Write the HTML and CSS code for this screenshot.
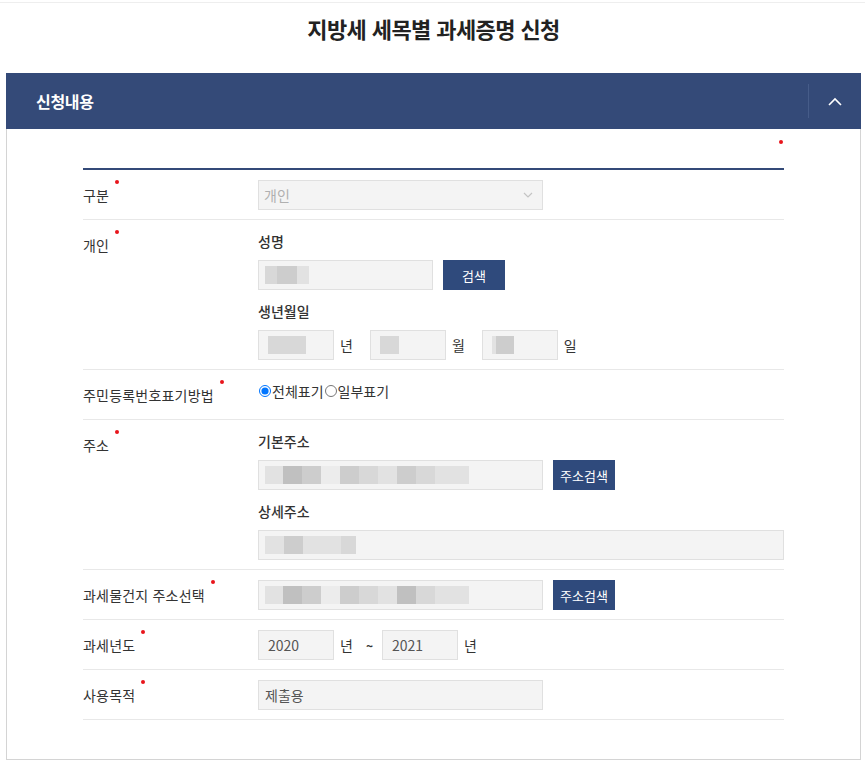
FILE: index.html
```html
<!DOCTYPE html>
<html lang="ko">
<head>
    <meta charset="UTF-8">
    <meta name="viewport" content="width=device-width, initial-scale=1.0">
    <title>지방세 세목별 과세증명 신청</title>
    <link rel="stylesheet" href="styles.css">
</head>
<body>
    <div class="page">
        <h2 class="title">지방세 세목별 과세증명 신청</h2>
        <div class="panel">
            <div class="panel-head">
                <h3>신청내용</h3>
                <button class="toggle" type="button" aria-label="접기">
                    <svg width="14" height="9" viewBox="0 0 14 9"><path d="M1 8 L7 2 L13 8" fill="none" stroke="#fff" stroke-width="1.6"/></svg>
                </button>
            </div>
            <div class="panel-body">
                <div class="req-note"><span class="dot"></span></div>
                <div class="form">
                    <div class="row">
                        <div class="label"><span class="req">구분</span></div>
                        <div class="field">
                            <div class="box w-mid select">개인
                                <svg width="10" height="6" viewBox="0 0 10 6"><path d="M1 1 L5 5 L9 1" fill="none" stroke="#c4c4c4" stroke-width="1.2"/></svg>
                            </div>
                        </div>
                    </div>
                    <div class="row">
                        <div class="label"><span class="req">개인</span></div>
                        <div class="field">
                            <div class="sub">성명</div>
                            <div class="line">
                                <div class="box w-name"><span class="blur b2" style="width:12px"></span><span class="blur b3" style="width:20px"></span><span class="blur b1" style="width:12px"></span></div>
                                <button class="btn" type="button">검색</button>
                            </div>
                            <div class="sub">생년월일</div>
                            <div class="line">
                                <div class="box w-small"><span class="blur b2" style="width:38px"></span></div>
                                <span class="unit">년</span>
                                <div class="box w-small"><span class="blur b2" style="width:19px"></span></div>
                                <span class="unit">월</span>
                                <div class="box w-small"><span class="blur b1" style="width:4px"></span><span class="blur b3" style="width:18px"></span></div>
                                <span class="unit">일</span>
                            </div>
                        </div>
                    </div>
                    <div class="row">
                        <div class="label"><span class="req">주민등록번호표기방법</span></div>
                        <div class="field">
                            <div class="radios">
                                <label><input type="radio" name="ssn" checked>전체표기</label>
                                <label><input type="radio" name="ssn">일부표기</label>
                            </div>
                        </div>
                    </div>
                    <div class="row">
                        <div class="label"><span class="req">주소</span></div>
                        <div class="field">
                            <div class="sub">기본주소</div>
                            <div class="line">
                                <div class="box w-mid">
                                    <span class="blur b1" style="width:18px"></span><span class="blur b4" style="width:19px"></span><span class="blur b3" style="width:19px"></span><span class="blur b0" style="width:19px"></span><span class="blur b3" style="width:19px"></span><span class="blur b2" style="width:19px"></span><span class="blur b1" style="width:19px"></span><span class="blur b3" style="width:19px"></span><span class="blur b2" style="width:19px"></span><span class="blur b1" style="width:19px"></span><span class="blur b1" style="width:15px"></span>
                                </div>
                                <button class="btn" type="button">주소검색</button>
                            </div>
                            <div class="sub">상세주소</div>
                            <div class="line">
                                <div class="box w-full"><span class="blur b1" style="width:19px"></span><span class="blur b3" style="width:19px"></span><span class="blur b1" style="width:19px"></span><span class="blur b1" style="width:19px"></span><span class="blur b2" style="width:15px"></span></div>
                            </div>
                        </div>
                    </div>
                    <div class="row">
                        <div class="label"><span class="req">과세물건지 주소선택</span></div>
                        <div class="field">
                            <div class="line">
                                <div class="box w-mid">
                                    <span class="blur b1" style="width:18px"></span><span class="blur b4" style="width:19px"></span><span class="blur b3" style="width:19px"></span><span class="blur b0" style="width:19px"></span><span class="blur b3" style="width:19px"></span><span class="blur b2" style="width:19px"></span><span class="blur b1" style="width:19px"></span><span class="blur b4" style="width:19px"></span><span class="blur b2" style="width:19px"></span><span class="blur b1" style="width:19px"></span><span class="blur b1" style="width:15px"></span>
                                </div>
                                <button class="btn" type="button">주소검색</button>
                            </div>
                        </div>
                    </div>
                    <div class="row">
                        <div class="label"><span class="req">과세년도</span></div>
                        <div class="field">
                            <div class="line">
                                <div class="box w-small">2020</div>
                                <span class="unit tight">년</span>
                                <span class="tilde">~</span>
                                <div class="box w-small">2021</div>
                                <span class="unit">년</span>
                            </div>
                        </div>
                    </div>
                    <div class="row">
                        <div class="label"><span class="req">사용목적</span></div>
                        <div class="field">
                            <div class="box w-mid">제출용</div>
                        </div>
                    </div>
                </div>
            </div>
        </div>
    </div>
</body>
</html>
```

FILE: styles.css
```css
body { margin: 0; padding: 0; font-family: "Noto Sans CJK KR", "Noto Sans", sans-serif; color: #333; background: #fff; }
.page { border-top: 1px solid #eee; margin-top: 2px; padding: 0 4px 0 6px; }
.title { margin: 0; height: 70px; line-height: 50px; text-align: center; font-size: 22px; font-weight: 700; color: #222; letter-spacing: -0.6px; }

.panel { border: 1px solid #d4d4d4; border-top: none; }
.panel-head { display: flex; align-items: center; height: 56px; background: #344a78; margin: 0 -1px; }
.panel-head h3 { flex: 1; margin: 0; padding-left: 30px; font-size: 16px; font-weight: 700; color: #fff; letter-spacing: -0.3px; }
.toggle { width: 53px; height: 34px; border: none; border-left: 1px solid #465c89; background: none; padding: 0; display: flex; align-items: center; justify-content: center; }

.panel-body { padding: 0 76px 39px 76px; }
.req-note { height: 39px; display: flex; justify-content: flex-end; padding-top: 11px; box-sizing: border-box; }
.dot { width: 4px; height: 4px; border-radius: 50%; background: #e8141b; margin-right: 1px; }

.form { border-top: 2px solid #344a78; }
.row { display: flex; padding: 10px 0 9px; border-bottom: 1px solid #e8e8e8; }
.label { width: 175px; flex: none; padding-top: 5px; font-size: 14px; line-height: 20px; color: #333; letter-spacing: 0.2px; }
.req { position: relative; }
.req::after { content: ""; position: absolute; right: -10px; top: -5px; width: 4px; height: 4px; border-radius: 50%; background: #e8141b; }
.field { flex: 1; font-size: 14px; }

.sub { font-size: 14px; font-weight: 500; line-height: 22px; margin-bottom: 8px; color: #333; }
.line + .sub { margin-top: 10px; }
.line { display: flex; align-items: center; }

.box { box-sizing: border-box; height: 30px; background: #f4f4f4; border: 1px solid #e0e0e0; padding: 0 9px; display: flex; align-items: center; font-size: 14px; color: #555; }
.w-small { width: 76px; }
.w-name { width: 175px; padding-left: 6px; }
.w-mid { width: 285px; padding-left: 6px; }
.w-full { width: 100%; padding-left: 6px; }
.select { color: #b0b0b0; justify-content: space-between; padding-left: 5px; padding-right: 9px; }

.blur { display: inline-block; height: 18px; }
.b0 { background: #ececec; }
.b1 { background: #e2e2e2; }
.b2 { background: #d8d8d8; }
.b3 { background: #cdcdcd; }
.b4 { background: #c0c0c0; }

.btn { height: 30px; margin-left: 10px; padding: 0 7px; min-width: 62px; border: none; background: #2f4a7c; color: #fff; font-family: inherit; font-size: 13px; }
.unit { margin: 0 17px 0 6px; font-size: 14px; color: #333; }
.unit.tight { margin-right: 13px; }
.tilde { margin-right: 9px; font-size: 12px; font-weight: 700; }

.radios { height: 30px; display: flex; align-items: flex-start; font-size: 14px; line-height: 22px; color: #333; }
.radios label { display: flex; align-items: center; }
.radios input { margin: 0 1px 0 1px; width: 12px; height: 12px; }
```
